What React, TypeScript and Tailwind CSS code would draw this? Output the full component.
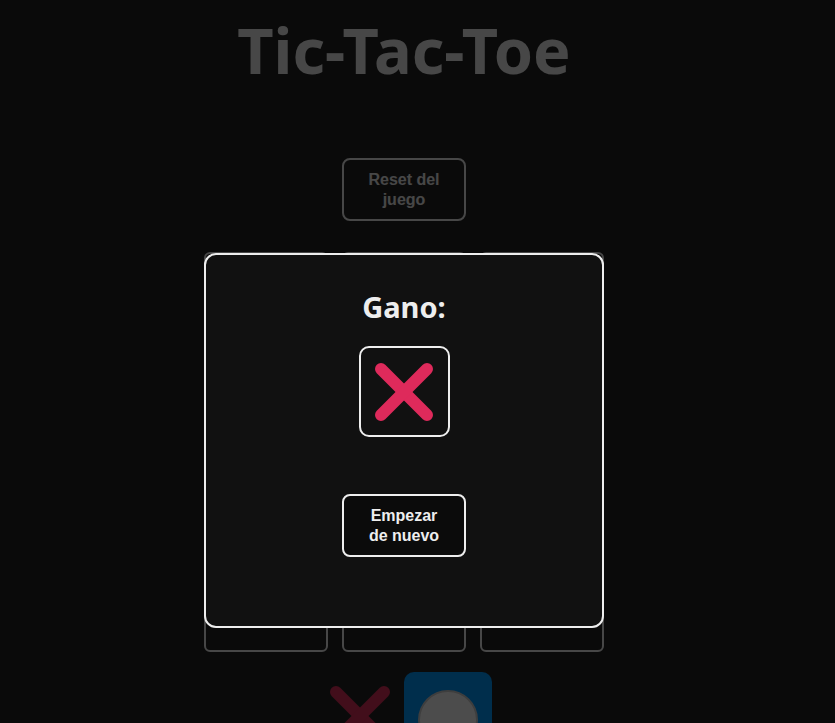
const SQUARES = Array.from({ length: 9 }, (_, i) => i);

function Cross({ size, color }: { size: number; color: string }) {
  const pad = 6;
  return (
    <svg width={size} height={size} viewBox={`0 0 ${size} ${size}`} aria-hidden="true">
      <line x1={pad} y1={pad} x2={size - pad} y2={size - pad} stroke={color} strokeWidth={12} strokeLinecap="round" />
      <line x1={size - pad} y1={pad} x2={pad} y2={size - pad} stroke={color} strokeWidth={12} strokeLinecap="round" />
    </svg>
  );
}

export default function App() {
  return (
    <div className="relative min-h-screen bg-[#242424] overflow-hidden">
      <main className="w-[808px] flex flex-col items-center pt-[18px]">
        <h1 className="font-['Noto_Sans',sans-serif] font-bold text-[63px] leading-[64px] text-[#eeeeee]">
          Tic-Tac-Toe
        </h1>

        <button className="mt-[76px] w-[124px] h-[63px] border-2 border-[#eeeeee] rounded-lg text-[#eeeeee] font-['Liberation_Sans',Arial,sans-serif] font-bold text-base leading-5">
          Reset del
          <br />
          juego
        </button>

        <section className="mt-[31px] grid grid-cols-3 gap-[14px] w-[400px]">
          {SQUARES.map((i) => (
            <div key={i} className="h-[124px] border-2 border-[#eeeeee] rounded-[6px]" />
          ))}
        </section>

        <section className="mt-[20px] flex">
          <div className="w-[88px] h-[88px] rounded-[10px] flex items-center justify-center">
            <Cross size={60} color="#dc2f5a" />
          </div>
          <div className="w-[88px] h-[88px] rounded-[10px] bg-[#0099ff] flex items-center justify-center pt-[8px]">
            <div className="w-[60px] h-[60px] rounded-full bg-white border-2 border-[#cfcfcf]" />
          </div>
        </section>
      </main>

      <div className="fixed inset-0 bg-black/70">
        <div className="w-[808px] flex justify-center pt-[253px]">
          <div className="w-[400px] h-[375px] bg-[#111111] border-2 border-[#eeeeee] rounded-xl flex flex-col items-center">
            <h2 className="mt-[34px] font-['Noto_Sans',sans-serif] font-bold text-[29px] leading-9 text-[#eeeeee]">
              Gano:
            </h2>
            <div className="mt-[21px] w-[91px] h-[91px] border-2 border-[#eeeeee] rounded-[10px] flex items-center justify-center">
              <Cross size={58} color="#de2a5b" />
            </div>
            <button className="mt-[57px] w-[124px] h-[63px] bg-[#0b0b0b] border-2 border-[#eeeeee] rounded-lg text-[#eeeeee] font-['Liberation_Sans',Arial,sans-serif] font-bold text-base leading-5">
              Empezar
              <br />
              de nuevo
            </button>
          </div>
        </div>
      </div>
    </div>
  );
}
